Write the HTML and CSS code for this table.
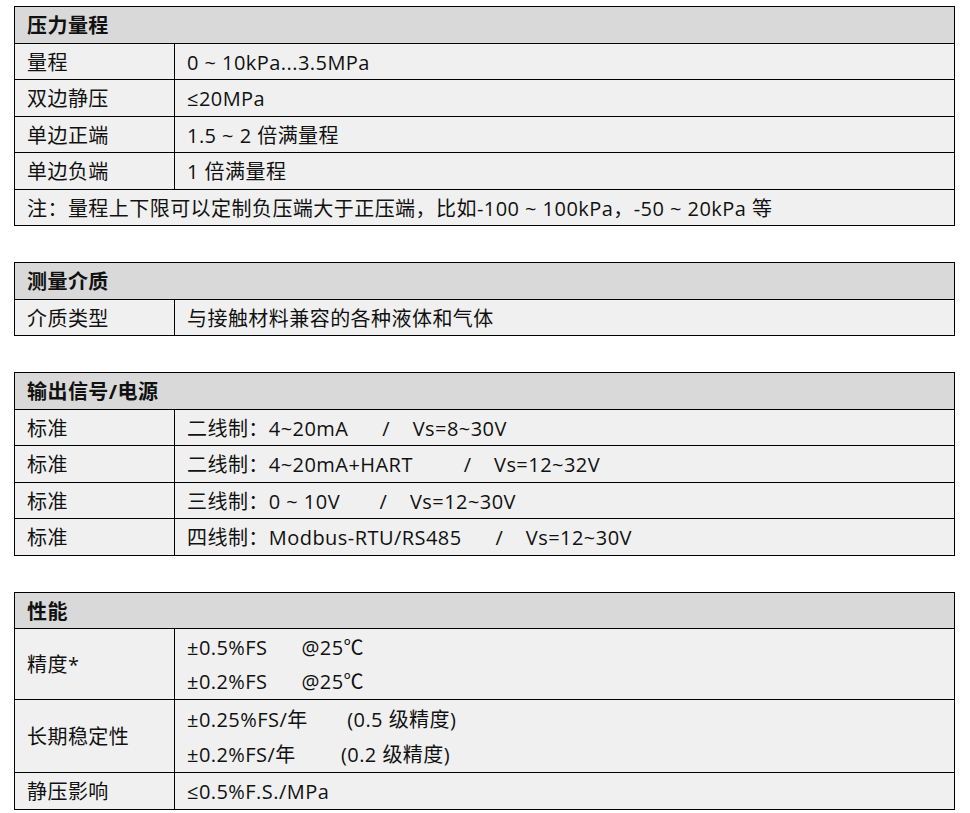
FILE: index.html
```html
<!DOCTYPE html>
<html lang="zh-CN">
<head>
<meta charset="utf-8">
<title>技术参数</title>
<link rel="stylesheet" href="styles.css">
</head>
<body>
<div class="page">
  <table class="spec">
    <colgroup><col class="c1"><col class="c2"></colgroup>
    <tr class="head"><th colspan="2">压力量程</th></tr>
    <tr><td>量程</td><td>0 ~ 10kPa...3.5MPa</td></tr>
    <tr><td>双边静压</td><td>≤20MPa</td></tr>
    <tr><td>单边正端</td><td>1.5 ~ 2 倍满量程</td></tr>
    <tr><td>单边负端</td><td>1 倍满量程</td></tr>
    <tr><td colspan="2">注：量程上下限可以定制负压端大于正压端，比如-100 ~ 100kPa，-50 ~ 20kPa 等</td></tr>
  </table>

  <table class="spec">
    <colgroup><col class="c1"><col class="c2"></colgroup>
    <tr class="head"><th colspan="2">测量介质</th></tr>
    <tr><td>介质类型</td><td>与接触材料兼容的各种液体和气体</td></tr>
  </table>

  <table class="spec">
    <colgroup><col class="c1"><col class="c2"></colgroup>
    <tr class="head"><th colspan="2">输出信号/电源</th></tr>
    <tr><td>标准</td><td class="pre">二线制：4~20mA      /    Vs=8~30V</td></tr>
    <tr><td>标准</td><td class="pre">二线制：4~20mA+HART         /    Vs=12~32V</td></tr>
    <tr><td>标准</td><td class="pre">三线制：0 ~ 10V       /    Vs=12~30V</td></tr>
    <tr><td>标准</td><td class="pre">四线制：Modbus-RTU/RS485      /    Vs=12~30V</td></tr>
  </table>

  <table class="spec">
    <colgroup><col class="c1"><col class="c2"></colgroup>
    <tr class="head"><th colspan="2">性能</th></tr>
    <tr><td>精度*</td><td class="multi a"><div class="pre">±0.5%FS      @25℃</div><div class="pre">±0.2%FS      @25℃</div></td></tr>
    <tr><td>长期稳定性</td><td class="multi b"><div class="pre">±0.25%FS/年       (0.5 级精度)</div><div class="pre">±0.2%FS/年        (0.2 级精度)</div></td></tr>
    <tr><td>静压影响</td><td>≤0.5%F.S./MPa</td></tr>
  </table>
</div>
</body>
</html>
```

FILE: styles.css
```css
html, body {
  margin: 0;
  padding: 0;
  background: #ffffff;
}

.page {
  padding: 6px 0 0 14px;
  display: flex;
  flex-direction: column;
  gap: 36px;
  font-family: "Open Sans", "Noto Sans CJK SC", sans-serif;
  font-size: 20px;
  letter-spacing: 0.45px;
  color: #111111;
}

.spec {
  width: 941px;
  border-collapse: collapse;
  table-layout: fixed;
}

.spec col.c1 {
  width: 160px;
}

.spec th,
.spec td {
  border: 1px solid #000000;
  background: #f0f0f0;
  text-align: left;
  vertical-align: middle;
  padding: 6px 12px 4px;
  line-height: 25.5px;
  font-weight: normal;
  white-space: nowrap;
}

.spec .head th {
  background: #d9d9d9;
  font-weight: bold;
}

.spec .pre {
  white-space: pre;
}

.spec td.multi {
  padding-top: 2px;
  padding-bottom: 0;
}

.multi.a div {
  line-height: 34px;
}

.multi.b div {
  line-height: 35px;
}
```
